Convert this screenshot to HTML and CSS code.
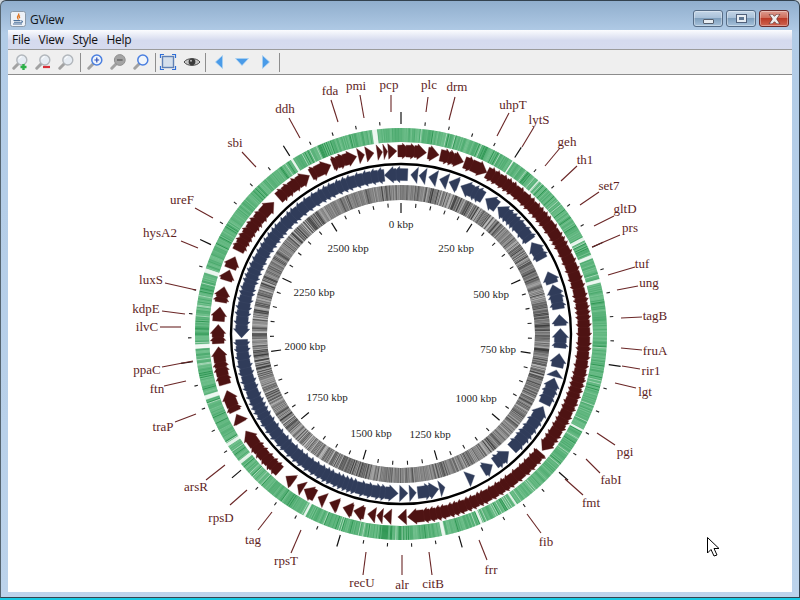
FILE: index.html
```html
<!DOCTYPE html>
<html lang="en">
<head>
<meta charset="utf-8">
<title>GView</title>
<link rel="stylesheet" href="styles.css">
</head>
<body>
<svg class="defs" aria-hidden="true">
  <symbol id="lens-gray" viewBox="0 0 16 16">
    <path d="M6 10 1.800 14.200" class="handle"/>
    <circle cx="9.800" cy="6" r="5" class="glass"/>
    <path d="M6.800 5.200a3.600 3.600 0 0 1 3-2.600" class="shine"/>
  </symbol>
  <symbol id="lens-blue" viewBox="0 0 16 16">
    <path d="M6 10 1.800 14.200" class="handle"/>
    <circle cx="9.800" cy="6" r="5" class="glass-blue"/>
  </symbol>
  <symbol id="lens-solid" viewBox="0 0 16 16">
    <path d="M6 10 1.800 14.200" class="handle"/>
    <circle cx="9.800" cy="6" r="5.400" class="glass-solid"/>
    <path d="M7 6h5.600" class="minus-dark"/>
  </symbol>
</svg>
<div class="window">
  <header class="titlebar">
    <svg class="app-icon" viewBox="0 0 16 16">
      <rect x="0.5" y="0.5" width="15" height="15" rx="2" class="app-tile"/>
      <path d="M8.500 2.500c1.500 1.600-2.200 2.800-.8 4.600.6.800.6 1.100.3 1.600M10 4.500c-1.600.9-.6 2 0 2.700" class="app-flame"/>
      <path d="M3.500 9.500h7M4 11.200h6.400M3 13h9M11 9.800c2 0 2 1.800-.5 2" class="app-cup"/>
    </svg>
    <span class="app-title">GView</span>
    <div class="caption">
      <button class="cap cap-min"><span class="glyph-min"></span></button>
      <button class="cap cap-max"><span class="glyph-max"></span></button>
      <button class="cap cap-close"><svg class="glyph-x" viewBox="0 0 12 9"><path d="M1 0h3l2 2 2-2h3L8 4.500 11 9H8L6 7 4 9H1l3-4.500z"/></svg></button>
    </div>
  </header>
  <div class="client">
    <nav class="menubar"><span>File</span><span>View</span><span>Style</span><span>Help</span></nav>
    <div class="toolbar">
      <span class="tool"><svg class="ico" viewBox="0 0 16 16"><use href="#lens-gray"/><path d="M11.500 10v6M8.500 13h6" class="plus-green"/></svg></span>
      <span class="tool"><svg class="ico" viewBox="0 0 16 16"><use href="#lens-gray"/><path d="M8 13h7" class="minus-red"/></svg></span>
      <span class="tool"><svg class="ico" viewBox="0 0 16 16"><use href="#lens-gray"/></svg></span>
      <span class="sep sep-wide"></span>
      <span class="tool"><svg class="ico" viewBox="0 0 16 16"><use href="#lens-blue"/><path d="M9.800 3.600v4.800M7.400 6h4.800" class="plus-blue"/></svg></span>
      <span class="tool"><svg class="ico" viewBox="0 0 16 16"><use href="#lens-solid"/></svg></span>
      <span class="tool"><svg class="ico" viewBox="0 0 16 16"><use href="#lens-blue"/></svg></span>
      <span class="sep"></span>
      <span class="tool"><svg class="ico" viewBox="0 0 16 16"><rect x="2.500" y="2.500" width="11" height="11" class="fit-box"/><path d="M.5 4V.5H4M12 .5h3.500V4M15.500 12v3.500H12M4 15.500H.5V12" class="fit-corners"/></svg></span>
      <span class="tool"><svg class="ico" viewBox="0 0 16 16"><path d="M0 8c3-4.500 13-4.500 16 0-3 4.500-13 4.500-16 0z" class="eye-white"/><circle cx="8" cy="7.800" r="3.400" class="eye-pupil"/><circle cx="7" cy="6.800" r="1" class="eye-glint"/></svg></span>
      <span class="sep"></span>
      <span class="tool"><svg class="ico" viewBox="0 0 16 16"><path d="M11.500 1.500v13L4.500 8z" class="nav"/></svg></span>
      <span class="tool"><svg class="ico" viewBox="0 0 16 16"><path d="M1.500 4.500h13L8 11.500z" class="nav"/></svg></span>
      <span class="tool"><svg class="ico" viewBox="0 0 16 16"><path d="M4.500 1.500v13l7-6.500z" class="nav"/></svg></span>
      <span class="sep"></span>
    </div>
    <main class="canvas">
      <svg class="map" viewBox="8 75 784 517">
        <g id="rings"></g>
        <g class="kbp">
          <text x="401" y="224">0 kbp</text>
          <text x="456" y="248">250 kbp</text>
          <text x="491" y="294">500 kbp</text>
          <text x="498" y="349">750 kbp</text>
          <text x="476" y="398">1000 kbp</text>
          <text x="430" y="434">1250 kbp</text>
          <text x="371" y="433">1500 kbp</text>
          <text x="327" y="397">1750 kbp</text>
          <text x="305" y="346">2000 kbp</text>
          <text x="314" y="292">2250 kbp</text>
          <text x="348" y="248">2500 kbp</text>
        </g>
        <g class="gene">
          <text x="330" y="90">fda</text>
          <text x="356" y="85">pmi</text>
          <text x="389" y="84">pcp</text>
          <text x="429" y="84">plc</text>
          <text x="457" y="86">drm</text>
          <text x="513" y="104">uhpT</text>
          <text x="539" y="119">lytS</text>
          <text x="567" y="141">geh</text>
          <text x="585" y="159">th1</text>
          <text x="609" y="185">set7</text>
          <text x="625" y="208">gltD</text>
          <text x="630" y="227">prs</text>
          <text x="642" y="263">tuf</text>
          <text x="649" y="282">ung</text>
          <text x="655" y="315">tagB</text>
          <text x="655" y="350">fruA</text>
          <text x="651" y="370">rir1</text>
          <text x="645" y="391">lgt</text>
          <text x="625" y="451">pgi</text>
          <text x="611" y="479">fabI</text>
          <text x="591" y="502">fmt</text>
          <text x="546" y="541">fib</text>
          <text x="491" y="569">frr</text>
          <text x="433" y="583">citB</text>
          <text x="402" y="584">alr</text>
          <text x="362" y="582">recU</text>
          <text x="286" y="560">rpsT</text>
          <text x="253" y="539">tag</text>
          <text x="221" y="517">rpsD</text>
          <text x="196" y="486">arsR</text>
          <text x="163" y="426">traP</text>
          <text x="157" y="388">ftn</text>
          <text x="147" y="369">ppaC</text>
          <text x="147" y="326">ilvC</text>
          <text x="146" y="308">kdpE</text>
          <text x="151" y="279">luxS</text>
          <text x="160" y="232">hysA2</text>
          <text x="182" y="199">ureF</text>
          <text x="235" y="142">sbi</text>
          <text x="285" y="108">ddh</text>
        </g>
        <path class="cursor" d="M707.500 537.500v15.500l3.500-3.500 3 6.500 3-1-3-6.500h5z"/>
      </svg>
    </main>
  </div>
</div>
<script src="map.js"></script>
</body>
</html>
```
FILE: styles.css
```css
* { box-sizing: border-box; }
html, body { margin: 0; padding: 0; }
body {
  width: 800px;
  height: 600px;
  overflow: hidden;
  padding-bottom: 2px;
  background: linear-gradient(to bottom, #cdd5dc 0, #cdd5dc 590px, #17c8e2 590px);
  font-family: "Open Sans", "Liberation Sans", sans-serif;
}
.defs { display: none; }
.window {
  height: 598px;
  display: flex;
  flex-direction: column;
  border: 1px solid #33424f;
  border-left-color: #55646f;
  border-radius: 6px 6px 0 0;
  background: linear-gradient(to bottom, #90aecd 0, #b2cce7 32px, #bcd3eb 100%);
  padding: 0 7px 5px;
}
.titlebar {
  height: 29px;
  flex: none;
  display: flex;
  align-items: flex-start;
}
.app-icon { width: 16px; height: 16px; margin: 10px 0 0 2px; }
.app-tile { fill: #eef2f7; stroke: #8b99a8; }
.app-flame { fill: none; stroke: #e0721c; stroke-width: 1.3; }
.app-cup { fill: none; stroke: #4a6f99; stroke-width: 1.1; }
.app-title { margin: 11px 0 0 4px; font-size: 12px; line-height: 16px; letter-spacing: -.2px; color: #10151a; }
.caption { margin-left: auto; margin-right: 3px; margin-top: 9px; display: flex; gap: 3px; }
.cap {
  width: 30px;
  height: 17px;
  padding: 0;
  display: flex;
  align-items: center;
  justify-content: center;
  border: 1px solid #566c86;
  border-radius: 3px;
  background: linear-gradient(to bottom, #c3d5e7 0, #a9c1d9 45%, #7f9fbd 50%, #a7c2db 100%);
  box-shadow: inset 0 0 0 1px rgba(255,255,255,.35);
}
.cap-close {
  border-color: #6b2b2b;
  background: linear-gradient(to bottom, #dc9c90 0, #d06e5c 45%, #bb3b28 50%, #cf6552 100%);
}
.glyph-min { display: block; width: 11px; height: 5px; margin-top: 5px; background: #e8edf2; border: 1px solid #56606e; border-radius: 1px; }
.glyph-max { display: block; width: 11px; height: 9px; background: #5f7793; border: 1px solid #50607a; box-shadow: inset 0 0 0 2px #e6ecf2; }
.glyph-x { width: 13px; height: 10px; fill: #eee; stroke: #60302c; stroke-width: .7; }
.client {
  flex: 1;
  min-height: 0;
  display: flex;
  flex-direction: column;
  background: #fff;
}
.menubar {
  height: 20px;
  flex: none;
  display: flex;
  gap: 8.6px;
  padding: 0 0 0 4px;
  align-items: center;
  font-size: 12px;
  letter-spacing: -.25px;
  color: #111;
  background: linear-gradient(to bottom, #fbfcfe 0, #d5daee 55%, #d6dbee 100%);
  border-bottom: 1px solid #9b9b9b;
}
.toolbar {
  height: 25px;
  flex: none;
  display: flex;
  align-items: center;
  background: #efefef;
  border-bottom: 1px solid #8c8c8c;
}
.tool { width: 23.3px; height: 24px; flex: none; display: flex; align-items: center; justify-content: center; }
.ico { width: 16px; height: 16px; overflow: visible; }
.sep { width: 1px; height: 19px; flex: none; margin: 0 1px 0 2px; background: #8e8e8e; }
.sep-wide { margin-right: 2px; }
.handle { fill: none; stroke: #a2a2a2; stroke-width: 3; stroke-linecap: round; }
.glass { fill: #e6ecf3; stroke: #b2b7bc; stroke-width: 1.4; }
.glass-blue { fill: #f0f5fb; stroke: #4a7fe0; stroke-width: 1.5; }
.glass-solid { fill: #a4a4a4; stroke: #909090; stroke-width: 1; }
.shine { fill: none; stroke: #fff; stroke-width: 1; }
.minus-dark { stroke: #6b6b6b; stroke-width: 1.6; }
.plus-green { fill: none; stroke: #2cb048; stroke-width: 2.4; }
.minus-red { fill: none; stroke: #d8303a; stroke-width: 2.2; }
.plus-blue { fill: none; stroke: #2a4fb8; stroke-width: 1.2; }
.fit-box { fill: #d4dfec; stroke: #5f80b4; stroke-width: 1.4; }
.fit-corners { fill: none; stroke: #2f6fd8; stroke-width: 1.2; }
.eye-white { fill: #c4c4c4; stroke: #4a4a4a; stroke-width: 1; }
.eye-pupil { fill: #3a3a3a; }
.eye-glint { fill: #b8b8b8; }
.nav { fill: #4a9be8; stroke: #a8d0f2; stroke-width: .7; }
.canvas { flex: 1; min-height: 0; background: #fff; }
.map { display: block; width: 784px; height: 517px; }
.map text { text-anchor: middle; dominant-baseline: central; font-family: "Liberation Serif", "Times New Roman", serif; }
.kbp text { font-size: 11px; fill: #1f1f1f; }
.gene text { font-size: 13px; fill: #5e1e1e; }
.cursor { fill: #fff; stroke: #000; stroke-width: 1; }
```
FILE: map.js
```js
(function () {
  var CX = 401, CY = 334, out = [];
  var seed = 20240611;
  function rnd() {
    seed = (seed * 1664525 + 1013904223) >>> 0;
    return seed / 4294967296;
  }
  function pt(r, a) {
    var t = a * Math.PI / 180;
    return (CX + r * Math.sin(t)).toFixed(2) + ' ' + (CY - r * Math.cos(t)).toFixed(2);
  }
  function radial(r1, r2, a, color, w) {
    out.push('<path d="M' + pt(r1, a) + 'L' + pt(r2, a) + '" stroke="' + color + '" stroke-width="' + w + '" fill="none"/>');
  }
  function ring(r, w, color) {
    out.push('<circle cx="' + CX + '" cy="' + CY + '" r="' + r + '" fill="none" stroke="' + color + '" stroke-width="' + w + '"/>');
  }
  function mix(a, b, t) {
    var c = [0, 1, 2].map(function (i) { return Math.round(a[i] + (b[i] - a[i]) * t); });
    return 'rgb(' + c.join(',') + ')';
  }

  /* GC-content ring */
  ring(199, 14, '#5fb37c');
  var darkZones = [[23, 26], [60, 64], [176, 186], [146, 150], [336, 340], [296, 300], [256, 259], [213, 216], [270, 272]];
  for (var a = 0; a < 360; a += 0.3) {
    var v = rnd(), col;
    var zone = darkZones.some(function (z) { return a >= z[0] && a <= z[1]; });
    if (v < (zone ? 0.35 : 0.06)) col = '#0a8033';
    else if (v > 0.95) col = '#e0f4e7';
    else col = mix([140, 210, 165], [55, 160, 95], rnd());
    radial(192, 206, a, col, 0.55);
  }
  [[-7.4, 1.2], [62.5, .8], [67.9, .8], [75, .8], [157, .6], [168, .8], [208, .5], [231.5, .9], [237.5, .9],
   [252, 1], [266.5, 1], [288, 1], [328, .5], [33, .3], [42, .3], [118, .4], [146, .4]].forEach(function (g) {
    for (var i = -g[1] / 2; i <= g[1] / 2; i += 0.1) radial(191, 207, g[0] + i, '#fff', 0.6);
  });

  /* coordinate ring */
  ring(170, 2.4, '#000');

  /* barcode ring */
  ring(141.5, 15, '#858585');
  var contrast = 0.5, left = 0;
  for (a = 0; a < 360; a += 0.2) {
    if (left-- <= 0) { contrast = 0.4 + rnd() * 0.6; left = 8 + rnd() * 50; }
    var g = 132 + (rnd() - 0.5) * 2 * 140 * contrast;
    if (rnd() < 0.12 * contrast) g = 10;
    g = Math.max(0, Math.min(255, Math.round(g)));
    radial(134, 149, a, 'rgb(' + g + ',' + g + ',' + g + ')', 0.42);
  }

  /* gene arrows */
  function arrow(a1, a2, tipEnd, rm, bodyH, headH, headPx, fill, edge) {
    var head = headPx / rm * 180 / Math.PI;
    var len = a2 - a1, d;
    if (head > len) head = len;
    if (tipEnd) {
      var n1 = a2 - head;
      d = 'M' + pt(rm + headH, n1) + 'L' + pt(rm, a2) + 'L' + pt(rm - headH, n1);
      if (n1 > a1) d += 'L' + pt(rm - bodyH, n1) + 'L' + pt(rm - bodyH, a1) + 'L' + pt(rm + bodyH, a1) + 'L' + pt(rm + bodyH, n1);
    } else {
      var n2 = a1 + head;
      d = 'M' + pt(rm + headH, n2) + 'L' + pt(rm, a1) + 'L' + pt(rm - headH, n2);
      if (n2 < a2) d += 'L' + pt(rm - bodyH, n2) + 'L' + pt(rm - bodyH, a2) + 'L' + pt(rm + bodyH, a2) + 'L' + pt(rm + bodyH, n2);
    }
    out.push('<path d="' + d + 'Z" fill="' + fill + '" stroke="' + edge + '" stroke-width=".35"/>');
  }
  function chain(list, tipEnd, rm, bodyH, headH, fill, edge) {
    var head = 9 / rm * 180 / Math.PI;
    list.forEach(function (iv) {
      var a1 = iv[0], a2 = iv[1];
      if (a2 - a1 < head * 1.5) { arrow(a1, a2, tipEnd, rm, bodyH, headH, 9, fill, edge); return; }
      var parts = [], pos = a1;
      while (pos < a2) {
        var e = Math.min(a2, pos + head + 0.3 + rnd() * 1.6);
        if (a2 - e < head * 0.5) e = a2;
        parts.push([pos, e]);
        pos = e - head * 0.6;
        if (e === a2) break;
      }
      if (!tipEnd) parts.reverse();
      parts.forEach(function (p) { arrow(p[0], p[1], tipEnd, rm, bodyH, headH, 9, fill, edge); });
    });
  }
  var red = [[-5.5, -4.2], [-4, -1.3], [-1, 8], [8.5, 12], [12.4, 20], [20.3, 28], [28, 129.5], [130.3, 178], [178.3, 181],
    [183, 185.5], [185.7, 187.6], [188, 190.5], [191.5, 195], [195.3, 198.5], [200, 203], [204.5, 207], [208, 212], [212.3, 214.5],
    [216, 219], [221.5, 238], [241, 244], [245, 252], [254, 266], [267, 273], [274, 278.5], [280, 285], [287, 290.5], [291, 295],
    [297, 316], [318, 330], [330.5, 337.5], [338, 346], [346.5, 348.5], [349, 351.5], [352.5, 354.2]];
  chain(red, true, 183, 5.9, 7.8, '#4e1313', '#5e2020');
  var blue = [[-6, 2.4], [3.5, 6], [6.5, 9], [10, 13], [14, 17], [17.5, 21], [22, 31], [32, 37], [37.3, 54], [55, 62],
    [67, 71.5], [72, 81], [83, 87], [88, 95], [97, 102], [103, 105.5], [106, 116], [117, 136], [137.5, 144], [145, 149],
    [152.5, 155.5], [164, 166], [166.3, 174], [174.5, 177], [177.5, 180.5], [181, 268], [268.6, 354]];
  chain(blue, false, 159.5, 6, 8.2, '#303c5a', '#404b68');

  /* scale ticks */
  var step = 32.8 / 5;
  for (var i = 0; i < 55; i++) {
    var t = i * step;
    if (t > 359.9) break;
    if (i % 5 === 0) {
      radial(210, 222, t, '#111', 1.2);
      radial(121, 131, t, '#111', 1.2);
    } else {
      radial(209.5, 213, t, '#222', 1.1);
      radial(127, 131, t, '#222', 1.1);
    }
  }

  /* label leader lines */
  [[331,100,338,122],[360,95,364,118],[391,95,391,112],[428,97,426,112],[455,97,449,120],[509,113,497,136],
   [534,127,522,147],[560,148,545,166],[577,166,561,181],[599,192,580,205],[614,216,594,226],[620,235,592,247],
   [635,267,608,275],[638,286,617,290],[642,317,621,318],[642,350,621,348],[640,369,622,366],[636,388,615,383],
   [615,445,597,433],[600,473,586,459],[583,495,565,479],[541,533,527,514],[487,560,479,540],[432,575,429,552],
   [402,575,402,555],[363,575,366,552],[291,553,301,530],[258,530,272,512],[230,505,247,490],[206,480,225,465],
   [175,422,196,414],[164,386,186,381],[162,367,193,361],[160,327,181,327],[162,311,185,314],[165,283,196,290],
   [181,241,198,248],[195,208,213,218],[242,152,256,167],[289,118,300,138]].forEach(function (l) {
    out.push('<path d="M' + l[0] + ' ' + l[1] + 'L' + l[2] + ' ' + l[3] + '" stroke="#6a2626" stroke-width="1.1" fill="none"/>');
  });

  document.getElementById('rings').innerHTML = out.join('');
})();
```
